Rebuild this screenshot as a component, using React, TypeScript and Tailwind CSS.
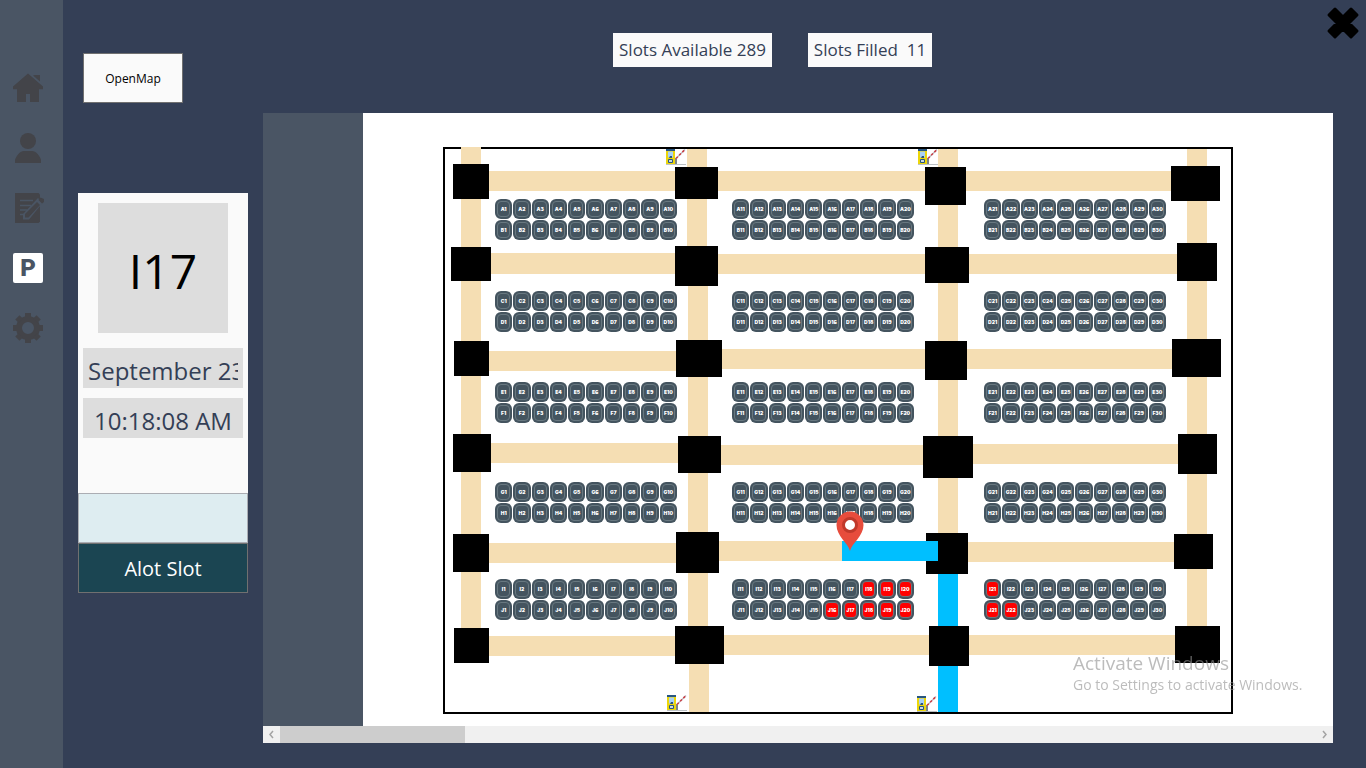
import type { ReactNode } from "react";

const BLOCK_COLUMNS = ["left-[50px]", "left-[287px]", "left-[539px]"];
const BLOCK_ROWS = [
  { top: "top-[50px]", letters: ["A", "B"] },
  { top: "top-[142px]", letters: ["C", "D"] },
  { top: "top-[233px]", letters: ["E", "F"] },
  { top: "top-[333px]", letters: ["G", "H"] },
  { top: "top-[430px]", letters: ["I", "J"] },
];

const FILLED = new Set(["I18", "I19", "I20", "J16", "J17", "J18", "J19", "J20", "I21", "J21", "J22"]);

// x, y, width, height
const ROADS = [
  [461, 147, 20, 500],
  [687, 149, 20, 120],
  [688, 270, 20, 370],
  [689, 640, 20, 72],
  [938, 149, 20, 420],
  [1187, 149, 20, 490],
  [480, 171, 700, 20],
  [480, 253, 220, 21],
  [700, 254, 240, 20],
  [940, 254, 240, 20],
  [480, 351, 220, 20],
  [700, 349, 240, 20],
  [940, 349, 240, 20],
  [480, 443, 220, 20],
  [700, 445, 240, 20],
  [940, 444, 240, 20],
  [480, 543, 220, 20],
  [700, 541, 240, 20],
  [940, 542, 240, 20],
  [480, 636, 220, 20],
  [700, 635, 480, 20],
];

const PILLARS = [
  [453, 164, 36, 35],
  [675, 167, 43, 32],
  [925, 167, 41, 38],
  [1171, 166, 49, 35],
  [451, 247, 40, 34],
  [675, 246, 43, 40],
  [925, 247, 44, 36],
  [1177, 243, 40, 38],
  [454, 341, 35, 35],
  [676, 340, 46, 37],
  [925, 341, 42, 39],
  [1172, 339, 49, 38],
  [453, 434, 38, 38],
  [678, 436, 43, 37],
  [923, 436, 50, 42],
  [1178, 434, 39, 40],
  [453, 534, 36, 38],
  [676, 532, 43, 41],
  [926, 533, 42, 41],
  [1174, 534, 39, 35],
  [454, 628, 35, 35],
  [675, 626, 49, 38],
  [929, 626, 40, 40],
  [1175, 626, 45, 37],
];

const GATES = [
  [666, 149],
  [918, 149],
  [667, 695],
  [917, 696],
];

function HomeIcon() {
  return (
    <svg viewBox="0 0 30 30" className="size-[30px] fill-[#434449]">
      <path d="M15 .5 30 13.5v2.700H26V29h-9v-8h-4v8H4V16.200H0v-2.700z" />
      <path d="M20 2.500 22 2h5v6.500z" />
    </svg>
  );
}

function UserIcon() {
  return (
    <svg viewBox="0 0 30 30" className="size-[30px] fill-[#434449]">
      <circle cx="15" cy="8" r="8" />
      <path d="M2 30v-3c1-4 5-9 9-9h8c4 0 8 5 9 9v3z" />
    </svg>
  );
}

function NoteIcon() {
  return (
    <svg viewBox="0 0 31 30" className="h-[30px] w-[31px]">
      <path d="M2 0h23.500l1.500 1.500V28.500L25.500 30H2z" fill="#434449" />
      <path d="M7 7.500h13M7 12.500h11M7 17h7M7 21.500h4" stroke="#4a5564" strokeWidth="1.500" />
      <path d="M10 26.500V21L25 5l4.500 5L16 26.500z" fill="#4a5564" />
      <path d="M12 24.500v-3.500L24 9l3 3L15.500 24.500z" fill="#434449" />
      <path d="m25.500 7 2-2.500 3.500 1.500v3L29 10.500z" fill="#434449" />
    </svg>
  );
}

function ParkingIcon() {
  return (
    <span className="flex size-[30px] items-center justify-center rounded-[2px] bg-white font-[Roboto,sans-serif] text-2xl leading-6 font-black text-[#4a5564]">
      P
    </span>
  );
}

function GearIcon() {
  return (
    <svg viewBox="-15 -15 30 30" className="size-[30px]">
      <circle r="9" fill="none" stroke="#434449" strokeWidth="6" />
      {[0, 45, 90, 135, 180, 225, 270, 315].map((angle) => (
        <path key={angle} d="M-3-15h6v5h-6z" fill="#434449" transform={`rotate(${angle})`} />
      ))}
    </svg>
  );
}

function NavButton({ label, children }: { label: string; children: ReactNode }) {
  return (
    <button type="button" aria-label={label} className="block h-[30px]">
      {children}
    </button>
  );
}

function Slot({ id }: { id: string }) {
  return (
    <button type="button" className="flex h-[20px] min-w-0 rounded-[6px] bg-[#44545f] p-[2px]">
      <span
        className={`flex h-full w-full items-center justify-center rounded-[4px] border border-[#687880] pt-px font-[Inter,sans-serif] text-[5px] leading-none font-black text-white ${
          FILLED.has(id) ? "bg-[#ff0000]" : "bg-[#44545f]"
        }`}
      >
        {id}
      </span>
    </button>
  );
}

function SlotBlock({ letters, start }: { letters: string[]; start: number }) {
  return (
    <div className="grid w-[182px] grid-cols-10 gap-x-px gap-y-px">
      {letters.flatMap((letter) =>
        Array.from({ length: 10 }, (_, i) => {
          const id = `${letter}${start + i}`;
          return <Slot key={id} id={id} />;
        }),
      )}
    </div>
  );
}

function Gate({ x, y }: { x: number; y: number }) {
  return (
    <g transform={`translate(${x} ${y})`}>
      <path d="M0 15.500h20" stroke="#bcc1c5" />
      <path d="M0 0h9v2H0z" fill="#285680" />
      <path d="M0 2h9v13H0z" fill="#ecd60a" />
      <path d="M2 2.500h5v6H2z" fill="#a9d1f5" />
      <path d="M4 7h2v2H3z" fill="#285680" />
      <path d="M2.500 10.500h4v3h-4z" fill="#c8d8e4" stroke="#285680" />
      <path d="M9 9h2v6H9z" fill="#7d8588" />
      <path d="m10 9.500 9-9" stroke="#b9bcc4" strokeWidth="1.500" />
      <path d="m10 9.500 9-9" stroke="#cc3f45" strokeWidth="1.500" strokeDasharray="2.500 2" />
    </g>
  );
}

function ParkingPlan() {
  return (
    <svg viewBox="443 147 790 567" className="absolute -top-[2px] -left-[2px] h-[567px] w-[790px]" aria-hidden="true">
      {ROADS.map(([x, y, width, height]) => (
        <rect key={`${x}-${y}`} x={x} y={y} width={width} height={height} fill="#f5deb3" />
      ))}
      <rect x="938" y="561" width="20" height="151" fill="#00bfff" />
      {PILLARS.map(([x, y, width, height]) => (
        <rect key={`${x}-${y}`} x={x} y={y} width={width} height={height} fill="#000" />
      ))}
      <rect x="842" y="541" width="96" height="20" fill="#00bfff" />
      {GATES.map(([x, y]) => (
        <Gate key={`${x}-${y}`} x={x} y={y} />
      ))}
    </svg>
  );
}

function Pin() {
  return (
    <svg viewBox="0 0 28 40" className="absolute top-[362px] left-[391px] h-[40px] w-[28px]" aria-label="Allotted slot">
      <path d="M14 40C12 32 .5 25 .5 14a13.500 13.500 0 0 1 27 0C27.500 25 16 32 14 40z" fill="#e74c3c" />
      <circle cx="14" cy="14" r="6.500" fill="#fff" stroke="#c0392b" strokeWidth="3" />
    </svg>
  );
}

function ScrollArrow({ label, d }: { label: string; d: string }) {
  return (
    <button type="button" aria-label={label} className="flex size-[17px] items-center justify-center">
      <svg viewBox="0 0 9 9" className="size-[9px] fill-none stroke-[#a3a3a3] stroke-[1.500]">
        <path d={d} />
      </svg>
    </button>
  );
}

export default function App() {
  return (
    <div className="flex min-h-screen bg-[#343f56] font-['Open_Sans','Noto_Sans',sans-serif]">
      <nav aria-label="Main" className="flex w-[63px] shrink-0 flex-col gap-[30px] bg-[#4a5564] pt-[73px] pl-[13px]">
        <NavButton label="Home"><HomeIcon /></NavButton>
        <NavButton label="Users"><UserIcon /></NavButton>
        <NavButton label="Records"><NoteIcon /></NavButton>
        <NavButton label="Parking"><ParkingIcon /></NavButton>
        <NavButton label="Settings"><GearIcon /></NavButton>
      </nav>

      <div className="flex min-w-0 flex-1 flex-col">
        <header className="flex h-[113px] items-start">
          <div className="w-[200px] shrink-0 pt-[53px] pl-5">
            <button type="button" className="h-[50px] w-[100px] border border-[#707070] bg-[#fafafa] pt-px text-xs text-black">
              OpenMap
            </button>
          </div>
          <div className="flex gap-9 pt-[33px] pl-[350px] text-[17px] leading-[34px] text-[#343f56]">
            <p className="w-[159px] bg-[#fafafa] text-center whitespace-pre">Slots Available 289</p>
            <p className="w-[124px] bg-[#fafafa] text-center whitespace-pre">{"Slots Filled  11"}</p>
          </div>
          <button type="button" aria-label="Close" className="mt-[6px] mr-[6px] ml-auto">
            <svg viewBox="0 0 34 34" className="size-[34px] fill-black stroke-black stroke-3" strokeLinejoin="round">
              <path d="m9 3 8 8 8-8 6 6-8 8 8 8-6 6-8-8-8 8-6-6 8-8-8-8z" />
            </svg>
          </button>
        </header>

        <main className="flex items-start pr-[33px] pb-[25px]">
          <aside className="mt-20 mr-[15px] ml-[15px] flex w-[170px] shrink-0 flex-col bg-[#fafafa] pt-[10px]">
            <div className="flex size-[130px] items-center justify-center self-center bg-[#dddddd] pt-[6px] text-5xl text-black">
              I17
            </div>
            <div className="mx-[5px] mt-[15px] bg-[#dddddd] px-[5px]">
              <p className="overflow-hidden pt-[6px] text-2xl leading-[34px] whitespace-nowrap text-[#343f56]">September 23</p>
            </div>
            <div className="mx-[5px] mt-[10px] bg-[#dddddd] px-[5px]">
              <p className="overflow-hidden pt-[6px] text-center text-2xl leading-[34px] whitespace-nowrap text-[#343f56]">10:18:08 AM</p>
            </div>
            <input
              type="text"
              aria-label="Slot holder"
              className="mt-[55px] h-[50px] w-full border border-[#abadb3] bg-[#deedf1] px-2 text-lg text-[#343f56] outline-none"
            />
            <button type="button" className="h-[50px] w-full border border-[#707070] bg-[#1b4552] pt-[2px] text-xl text-white">
              Alot Slot
            </button>
          </aside>

          <section aria-label="Parking map" className="flex min-w-0 flex-1 flex-col">
            <div className="flex">
              <div className="w-[100px] shrink-0 bg-[#4a5564]" />
              <div className="min-w-0 flex-1 overflow-hidden bg-white pt-[34px] pb-3 pl-20">
                <div className="relative h-[567px] w-[790px] border-2 border-black">
                  <ParkingPlan />
                  {BLOCK_ROWS.flatMap((row) =>
                    BLOCK_COLUMNS.map((left, column) => (
                      <div key={`${row.top}-${left}`} className={`absolute ${row.top} ${left}`}>
                        <SlotBlock letters={row.letters} start={column * 10 + 1} />
                      </div>
                    )),
                  )}
                  <Pin />
                </div>
              </div>
            </div>
            <div className="flex h-[17px] bg-[#f0f0f0]">
              <ScrollArrow label="Scroll left" d="M6 1 3 4.500 6 8" />
              <div className="w-[185px] bg-[#cdcdcd]" />
              <div className="ml-auto">
                <ScrollArrow label="Scroll right" d="m3 1 3 3.500L3 8" />
              </div>
            </div>
          </section>
        </main>
      </div>

      <div className="pointer-events-none fixed right-[57px] bottom-[73px] w-[236px] whitespace-nowrap text-[#8f8f8f]/60">
        <p className="text-[19px] leading-6">Activate Windows</p>
        <p className="text-sm leading-5">Go to Settings to activate Windows.</p>
      </div>
    </div>
  );
}
